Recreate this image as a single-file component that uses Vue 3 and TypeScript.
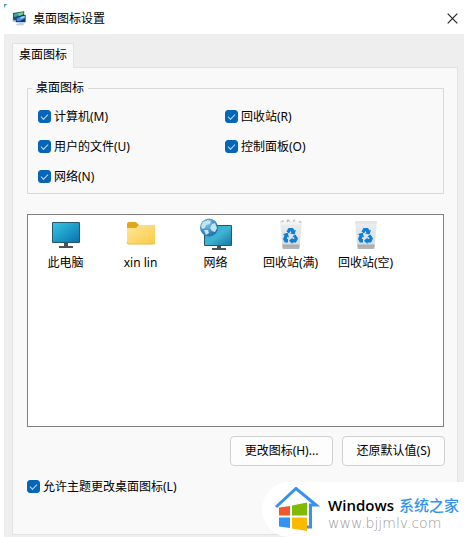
<script setup lang="ts">
import { ref } from 'vue'

interface Toggle {
  id: string
  label: string
  checked: boolean
}

type Glyph = 'pc' | 'folder' | 'network' | 'bin-full' | 'bin-empty'

const toggles = ref<Toggle[]>([
  { id: 'computer', label: '计算机(M)', checked: true },
  { id: 'recycle', label: '回收站(R)', checked: true },
  { id: 'files', label: '用户的文件(U)', checked: true },
  { id: 'panel', label: '控制面板(O)', checked: true },
  { id: 'network', label: '网络(N)', checked: true },
])

const icons: { glyph: Glyph; label: string }[] = [
  { glyph: 'pc', label: '此电脑' },
  { glyph: 'folder', label: 'xin lin' },
  { glyph: 'network', label: '网络' },
  { glyph: 'bin-full', label: '回收站(满)' },
  { glyph: 'bin-empty', label: '回收站(空)' },
]

const allowThemes = ref(true)
</script>

<template>
  <main class="dialog">
    <svg class="corner" viewBox="0 0 5 5" aria-hidden="true">
      <path d="M0 0h5Q1 0 0 5z" fill="#5f8f9c" />
    </svg>
    <header class="titlebar">
      <svg class="app-icon" viewBox="0 0 16 17" aria-hidden="true">
        <path d="M1 2.500 13 .8v9.700L1 10.500z" fill="#1f4f74" />
        <path d="M2 3.500 12 1.800V4L7 7 2 6.500z" fill="#37a79a" />
        <path d="M6 3 12 1.800v2L8 5.500z" fill="#86d468" />
        <path d="M4 6.500 14.500 4.500v8L4 12.500z" fill="#17356f" />
        <path d="M5 8l8.500-2.500v3L8 11.500H5z" fill="#3f8fe0" />
        <path d="M9 6.800l4.500-1.300v2L9 9z" fill="#8fd9e8" />
        <path d="M.5 9.500l3 .5v2.500l-3-1z" fill="#b9a9d8" />
        <path d="M4 14.300l6-1.300 4 1-3 2-6-.3z" fill="#c9cde0" />
      </svg>
      <h1 class="title">桌面图标设置</h1>
      <button class="close" type="button" aria-label="关闭">
        <svg viewBox="0 0 11 11" aria-hidden="true">
          <path d="M.7.7l9.600 9.600M10.300.7.7 10.300" fill="none" stroke="#222" stroke-width="1.2" />
        </svg>
      </button>
    </header>

    <div class="body">
      <div class="tabs" role="tablist">
        <button class="tab" type="button" role="tab" aria-selected="true">桌面图标</button>
      </div>

      <section class="panel" role="tabpanel">
        <fieldset class="group">
          <legend>桌面图标</legend>
          <label v-for="t in toggles" :key="t.id" class="check">
            <input v-model="t.checked" type="checkbox" />
            <span>{{ t.label }}</span>
          </label>
        </fieldset>

        <ul class="icon-list">
          <li v-for="icon in icons" :key="icon.label" class="icon-item">
            <svg class="glyph" viewBox="0 0 32 32" aria-hidden="true">
              <defs>
                <linearGradient id="screen" x1="0" y1="0" x2="1" y2="1">
                  <stop offset="0" stop-color="#35c5e4" />
                  <stop offset="1" stop-color="#0873ad" />
                </linearGradient>
                <linearGradient id="net-screen" x1="0" y1="0" x2="1" y2="1">
                  <stop offset="0" stop-color="#2fa3c4" />
                  <stop offset=".5" stop-color="#3fb4d2" />
                  <stop offset="1" stop-color="#1579a6" />
                </linearGradient>
                <linearGradient id="folder" x1="0" y1="0" x2="1" y2="1">
                  <stop offset="0" stop-color="#ffe69a" />
                  <stop offset="1" stop-color="#fbcb45" />
                </linearGradient>
                <linearGradient id="bin" x1="0" y1="0" x2="0" y2="1">
                  <stop offset="0" stop-color="#eceff0" />
                  <stop offset=".82" stop-color="#d9dde0" />
                  <stop offset=".86" stop-color="#a9adb1" />
                  <stop offset="1" stop-color="#b4b8bb" />
                </linearGradient>
                <radialGradient id="globe" cx=".4" cy=".3" r=".7">
                  <stop offset="0" stop-color="#7cc4ea" />
                  <stop offset="1" stop-color="#1b6fae" />
                </radialGradient>
              </defs>

              <template v-if="icon.glyph === 'pc'">
                <path d="M14 24h4v3h5v2H9v-2h5z" fill="#49545c" />
                <rect x="2" y="3" width="28" height="21" rx="1" fill="#28566d" />
                <rect x="3" y="4" width="26" height="19" fill="url(#screen)" />
              </template>

              <template v-else-if="icon.glyph === 'folder'">
                <path d="M2 5q0-2 2-2h7l3 3h14q2 0 2 2v4H2z" fill="#e2a61b" />
                <path d="M2 9h9l3-3h14q2 0 2 2v15q0 2-2 2H4q-2 0-2-2z" fill="url(#folder)" />
                <path d="M2 23q0 2 2 2h24q2 0 2-2" fill="none" stroke="#e9b83d" />
              </template>

              <template v-else-if="icon.glyph === 'network'">
                <path d="M17 26h4v3h5v2H12v-2h5z" fill="#49545c" />
                <rect x="4" y="6" width="28" height="21" rx="1" fill="#28566d" />
                <rect x="5" y="7" width="26" height="19" fill="url(#net-screen)" />
                <circle cx="9" cy="8.500" r="9" fill="url(#globe)" />
                <path d="M3 3l5-2 3 1-1 3-4 1-1 3-3 1-1-3zM12 5l3-1 2 5-2 4-3-1-2-3zM4 11l4 0 1 3-3 2z" fill="#c4e2f2" />
              </template>

              <template v-else>
                <path d="M5 2h22l-2.500 27q0 1-1 1h-15q-1 0-1-1z" fill="url(#bin)" />
                <path d="M5 2h22l-.3 2.500H5.300z" fill="#e1e5e7" />
                <template v-if="icon.glyph === 'bin-full'">
                  <path d="M5 4l2-3 3 1 2-2 4 2 3-2 3 2 3-1 2 3-1 1.500H6z" fill="#f4f4f4" />
                  <path
                    d="M6.500 3l2-1.500M12 3l1-2 2 1.500M18 2.500l2-1.500M24 2.500l2 1"
                    fill="none"
                    stroke="#b9bcbe"
                    stroke-width="1.2"
                  />
                </template>
                <g fill="#0d7fd6">
                  <path d="M11.500 12.500l2-3.500h4.500l1.500 2.500 1.500-.8-1.500 4.800-4.500-1 1.500-1-1-1.500-1.500 2.500z" />
                  <path d="M20.500 15.500l2.500 4-2 4h-3.500v1.500l-3.500-3.200 3.500-3.400v1.600h2l-.5-1.500-1.500-1.300z" />
                  <path d="M8 15l4.700-1.200 1.300 4.700-1.500-.7-.8 2.200h1.300v3.500H9.800L8 20l1.500-3.500z" />
                </g>
              </template>
            </svg>
            <span>{{ icon.label }}</span>
          </li>
        </ul>

        <div class="actions">
          <button class="btn" type="button">更改图标(H)...</button>
          <button class="btn" type="button">还原默认值(S)</button>
        </div>

        <label class="check">
          <input v-model="allowThemes" type="checkbox" />
          <span>允许主题更改桌面图标(L)</span>
        </label>
      </section>
    </div>

    <aside class="badge">
      <svg class="house" viewBox="0 0 46 44" aria-hidden="true">
        <path d="M2 20 22 1.500 42 18h-5.500V40H31" fill="none" stroke="#3492f0" stroke-width="3" />
        <path d="M5 20.500l11-1.500v9.500H5z" fill="#f1592a" />
        <path d="M18 18.500 33 15.500v13H18z" fill="#80bb01" />
        <path d="M5 30.500h11V41L5 39.500z" fill="#3492f0" />
        <path d="M18 30.500h15V44l-15-2.500z" fill="#fdb900" />
      </svg>
      <div class="brand">
        <div class="name"><span>Windows</span><span class="cn">系统之家</span></div>
        <div class="site">www.bjjmlv.com</div>
      </div>
    </aside>
  </main>
</template>

<style>
body {
  margin: 0;
  background: #fff;
}
</style>

<style scoped>
.dialog {
  position: relative;
  box-sizing: border-box;
  min-height: 100vh;
  padding: 3px 0 0 4px;
  display: flex;
  flex-direction: column;
  overflow: hidden;
  font: 12px/16px "Noto Sans", "Noto Sans CJK SC", sans-serif;
  color: #000;
}

.corner {
  position: absolute;
  top: 4px;
  left: 4px;
  width: 5px;
  height: 5px;
}

.titlebar {
  display: flex;
  align-items: center;
  gap: 6px;
  height: 31px;
  padding: 0 6px 0 8px;
}

.app-icon {
  width: 15px;
  height: 17px;
}

.title {
  flex: 1;
  margin: 0;
  font-size: 12px;
  font-weight: 400;
}

.close {
  display: flex;
  padding: 0;
  border: 0;
  background: none;
}

.close svg {
  width: 11px;
  height: 11px;
}

.body {
  flex: 1;
  display: flex;
  flex-direction: column;
  padding: 9px 6px 2px 8px;
  background: #eee;
}

.tabs {
  display: flex;
}

.tab {
  z-index: 1;
  height: 25px;
  margin-bottom: -1px;
  padding: 0 6px 2px;
  border: 1px solid #e3e3e3;
  border-bottom: 0;
  background: #f9f9f9;
  font: inherit;
  color: inherit;
}

.panel {
  flex: 1;
  display: flex;
  flex-direction: column;
  padding: 12px 12px 39px 14px;
  border: 1px solid #e3e3e3;
  background: #f9f9f9;
}

.group {
  display: grid;
  grid-template-columns: 187px 1fr;
  row-gap: 13px;
  min-width: 0;
  margin: 0 1px 20px 0;
  padding: 12px 10px 8px;
  border: 1px solid #d9d9d9;
}

.group legend {
  margin-left: -6px;
  padding: 0 4px;
}

.check {
  display: flex;
  align-items: center;
  gap: 3px;
}

.check span {
  padding-top: 1px;
}

.check input {
  appearance: none;
  display: grid;
  place-items: center;
  width: 13px;
  height: 13px;
  margin: 0;
  border: 1px solid #767676;
  border-radius: 3px;
  background: #fff;
}

.check input:checked {
  border-color: #0765b8;
  background: #0765b8;
}

.check input:checked::before {
  content: "";
  width: 6px;
  height: 3px;
  margin-bottom: 2px;
  border: solid #b9dcf8;
  border-width: 0 0 1px 1px;
  rotate: -45deg;
}

.icon-list {
  flex: 1;
  display: flex;
  align-items: flex-start;
  min-height: 208px;
  margin: 0 1px 9px 0;
  padding: 4px 0 0;
  box-sizing: border-box;
  border: 1px solid #808080;
  background: #fff;
  list-style: none;
}

.icon-item {
  display: flex;
  flex-direction: column;
  align-items: center;
  gap: 4px;
  width: 75px;
}

.glyph {
  width: 32px;
  height: 32px;
  overflow: visible;
}

.actions {
  display: flex;
  justify-content: flex-end;
  gap: 9px;
  margin-bottom: 12px;
}

.btn {
  width: 103px;
  height: 30px;
  padding: 0;
  border: 1px solid #d0d0d0;
  border-radius: 4px;
  background: #fdfdfd;
  font: inherit;
  color: inherit;
}

.badge {
  position: absolute;
  right: 0;
  bottom: 0;
  display: flex;
  gap: 8px;
  box-sizing: border-box;
  height: 55px;
  padding: 5px 5px 0 12px;
  border-radius: 28px 0 0 28px;
  background: #fff;
}

.house {
  width: 46px;
  height: 44px;
}

.brand {
  padding-top: 8px;
}

.name {
  display: flex;
  gap: 5px;
  font-size: 15px;
  font-weight: 500;
  line-height: 20px;
}

.name span:first-child {
  font-family: "Open Sans", "Noto Sans", sans-serif;
  font-weight: 600;
}

.cn {
  color: #3492f0;
}

.site {
  font-family: "DejaVu Sans", sans-serif;
  font-size: 14px;
  font-weight: 300;
  line-height: 16px;
  color: #999;
}
</style>
